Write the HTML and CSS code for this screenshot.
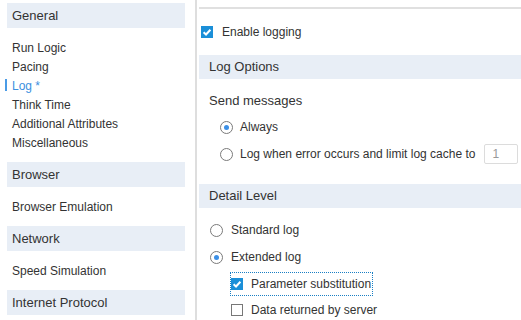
FILE: index.html
```html
<!DOCTYPE html>
<html>
<head>
<meta charset="utf-8">
<link rel="stylesheet" href="styles.css">
</head>
<body>
<div class="app">
  <nav class="sidebar">
    <div class="nav-head">General</div>
    <ul class="nav-list">
      <li>Run Logic</li>
      <li>Pacing</li>
      <li class="active">Log *</li>
      <li>Think Time</li>
      <li>Additional Attributes</li>
      <li>Miscellaneous</li>
    </ul>
    <div class="nav-head">Browser</div>
    <ul class="nav-list">
      <li>Browser Emulation</li>
    </ul>
    <div class="nav-head">Network</div>
    <ul class="nav-list">
      <li>Speed Simulation</li>
    </ul>
    <div class="nav-head">Internet Protocol</div>
  </nav>
  <main class="content">
    <div class="topline"></div>
    <div class="row enable">
      <span class="cb on"><svg viewBox="0 0 12 12" width="12" height="12"><path d="M2.6 6.3 L5 8.5 L9.4 3.8" fill="none" stroke="#fff" stroke-width="2"/></svg></span>
      <span>Enable logging</span>
    </div>
    <div class="section-head first">Log Options</div>
    <div class="sub-title">Send messages</div>
    <div class="row opt2 always"><span class="radio on"></span><span>Always</span></div>
    <div class="row opt2 when"><span class="radio"></span><span>Log when error occurs and limit log cache to</span><span class="num">1</span></div>
    <div class="section-head second">Detail Level</div>
    <div class="row opt1 standard"><span class="radio"></span><span>Standard log</span></div>
    <div class="row opt1 extended"><span class="radio on"></span><span>Extended log</span></div>
    <div class="row param">
      <div class="focus">
        <span class="cb on"><svg viewBox="0 0 12 12" width="12" height="12"><path d="M2.6 6.3 L5 8.5 L9.4 3.8" fill="none" stroke="#fff" stroke-width="2"/></svg></span>
        <span>Parameter substitution</span>
      </div>
    </div>
    <div class="row data"><span class="cb"></span><span>Data returned by server</span></div>
  </main>
</div>
</body>
</html>
```

FILE: styles.css
```css
html, body {
  margin: 0;
  padding: 0;
  background: #fff;
}
body {
  font-family: "Liberation Sans", Arial, sans-serif;
  color: #333;
  font-size: 12px;
  width: 521px;
  height: 320px;
  overflow: hidden;
}
.app {
  display: flex;
  height: 320px;
}
.sidebar {
  width: 178px;
  padding: 3px 10px 0 7px;
  flex: none;
}
.nav-head {
  height: 25px;
  line-height: 25px;
  background: #e8eef6;
  font-size: 13px;
  padding-left: 5px;
  color: #333;
}
.nav-list {
  list-style: none;
  margin: 0;
  padding: 11px 0 9px 5px;
}
.nav-list li {
  line-height: 19px;
  height: 19px;
  font-size: 12px;
  position: relative;
}
.nav-list li.active {
  color: #3b8fe0;
}
.nav-list li.active::before {
  content: "";
  position: absolute;
  left: -7px;
  top: 2px;
  width: 2px;
  height: 12px;
  background: #4a9be6;
}
.content {
  flex: 1;
  border-left: 2px solid #dedede;
  padding-left: 2px;
  display: flex;
  flex-direction: column;
  min-width: 0;
}
.topline {
  margin-top: 7px;
  height: 2px;
  background: #e0e0e0;
}
.row {
  display: flex;
  align-items: center;
  height: 20px;
  white-space: nowrap;
}
.enable {
  margin-top: 13px;
  padding-left: 2px;
  gap: 9px;
}
.cb {
  width: 12px;
  height: 12px;
  box-sizing: border-box;
  border: 1px solid #777;
  background: #fff;
  flex: none;
  display: flex;
}
.cb.on {
  border: none;
  background: #1b8fd8;
}
.section-head {
  height: 24px;
  line-height: 24px;
  background: #e8eef6;
  font-size: 13px;
  padding-left: 10px;
}
.section-head.first {
  margin-top: 13px;
}
.section-head.second {
  margin-top: 20px;
}
.sub-title {
  margin-top: 12px;
  height: 20px;
  line-height: 20px;
  font-size: 13px;
  padding-left: 10px;
}
.radio {
  width: 13px;
  height: 13px;
  box-sizing: border-box;
  border: 1px solid #7a7a7a;
  border-radius: 50%;
  flex: none;
  display: flex;
  align-items: center;
  justify-content: center;
  background: #fff;
}
.radio.on::after {
  content: "";
  width: 5px;
  height: 5px;
  border-radius: 50%;
  background: #3b8fe6;
}
.opt2 {
  padding-left: 21px;
  gap: 7px;
}
.always {
  margin-top: 6px;
}
.when {
  margin-top: 7px;
}
.num {
  margin-left: 2px;
  width: 34px;
  height: 20px;
  box-sizing: border-box;
  border: 1px solid #dcdcdc;
  border-radius: 2px;
  color: #999;
  padding-left: 7px;
  line-height: 18px;
}
.opt1 {
  padding-left: 11px;
  gap: 8px;
}
.standard {
  margin-top: 12px;
}
.extended {
  margin-top: 7px;
}
.param {
  margin-top: 5px;
  height: 24px;
  padding-left: 31px;
}
.focus {
  display: flex;
  align-items: center;
  gap: 8px;
  height: 24px;
  box-sizing: border-box;
  border: 1px dotted #1a7fc4;
  padding: 0 1px 0 0;
}
.data {
  margin-top: 4px;
  padding-left: 32px;
  gap: 8px;
}
```
